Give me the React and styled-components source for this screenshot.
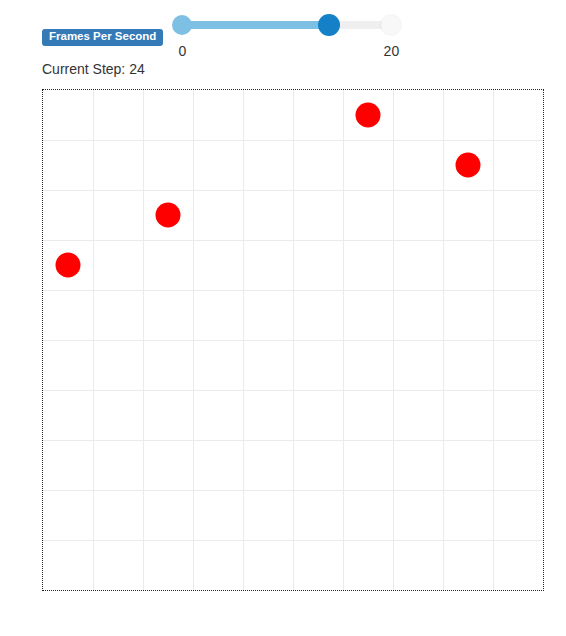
import React from "react";
import styled, { createGlobalStyle } from "styled-components";

const GlobalStyle = createGlobalStyle`
  body {
    margin: 0;
    background: #fff;
    font-family: "Liberation Sans", Arial, Helvetica, sans-serif;
    font-size: 14px;
    color: #333;
  }
`;

const Page = styled.div`
  padding: 15px 0 0 42px;
`;

const Controls = styled.div`
  display: flex;
  align-items: flex-start;
`;

const Badge = styled.span`
  margin-top: 14px;
  display: inline-block;
  padding: 2px 7px 3px;
  font-size: 11.5px;
  line-height: 1;
  font-weight: bold;
  color: #fff;
  background: #337ab7;
  border-radius: 3px;
  white-space: nowrap;
`;

const Slider = styled.div`
  margin-left: 9px;
  width: 209px;
  padding: 0 10px;
`;

const TrackArea = styled.div`
  position: relative;
  height: 20px;
`;

const Track = styled.div`
  position: absolute;
  left: 0;
  right: 0;
  top: 6px;
  height: 8px;
  border-radius: 4px;
  background: #efefef;
`;

const Fill = styled.div`
  position: absolute;
  left: 0;
  top: 6px;
  height: 8px;
  background: #7dc0e4;
`;

const Thumb = styled.div`
  position: absolute;
  top: ${(p) => (p.$size === 22 ? -1 : 0)}px;
  width: ${(p) => p.$size}px;
  height: ${(p) => p.$size}px;
  margin-left: -${(p) => p.$size / 2}px;
  border-radius: 50%;
  background: ${(p) => p.$color};
  box-shadow: ${(p) => (p.$light ? "0 0 2px rgba(0,0,0,0.12)" : "none")};
`;

const Ticks = styled.div`
  display: flex;
  justify-content: space-between;
  margin: 8px -10px 0;
  height: 14px;
`;

const Tick = styled.span`
  width: 20px;
  text-align: center;
  line-height: 16px;
`;

const Step = styled.div`
  margin-top: 4px;
  line-height: 16px;
`;

const Board = styled.div`
  margin-top: 12px;
  width: 500px;
  height: 500px;
  border: 1px dotted #222;
`;

const max = 20;
const value = 14;
const dots = [
  [25, 175],
  [125, 125],
  [325, 25],
  [425, 75],
];

const App = () => {
  const pct = (value / max) * 100;
  const lines = [50, 100, 150, 200, 250, 300, 350, 400, 450];
  return (
    <Page>
      <GlobalStyle />
      <Controls>
        <Badge>Frames Per Second</Badge>
        <Slider>
          <TrackArea>
            <Track />
            <Fill style={{ width: `${pct}%` }} />
            <Thumb $size={20} $color="#7dc0e4" style={{ left: "0%" }} />
            <Thumb $size={22} $color="#1380c8" style={{ left: `${pct}%` }} />
            <Thumb $size={20} $color="#f8f8f8" $light style={{ left: "100%" }} />
          </TrackArea>
          <Ticks>
            <Tick>0</Tick>
            <Tick>{max}</Tick>
          </Ticks>
        </Slider>
      </Controls>
      <Step>Current Step: 24</Step>
      <Board>
        <svg width="500" height="500" viewBox="0 0 500 500">
          {lines.map((v) => (
            <g key={v} stroke="#ebebeb" strokeWidth="1">
              <line x1={v + 0.5} y1="0" x2={v + 0.5} y2="500" />
              <line x1="0" y1={v + 0.5} x2="500" y2={v + 0.5} />
            </g>
          ))}
          {dots.map(([x, y], i) => (
            <circle key={i} cx={x} cy={y} r="12.5" fill="#ff0000" />
          ))}
        </svg>
      </Board>
    </Page>
  );
};

export default App;
